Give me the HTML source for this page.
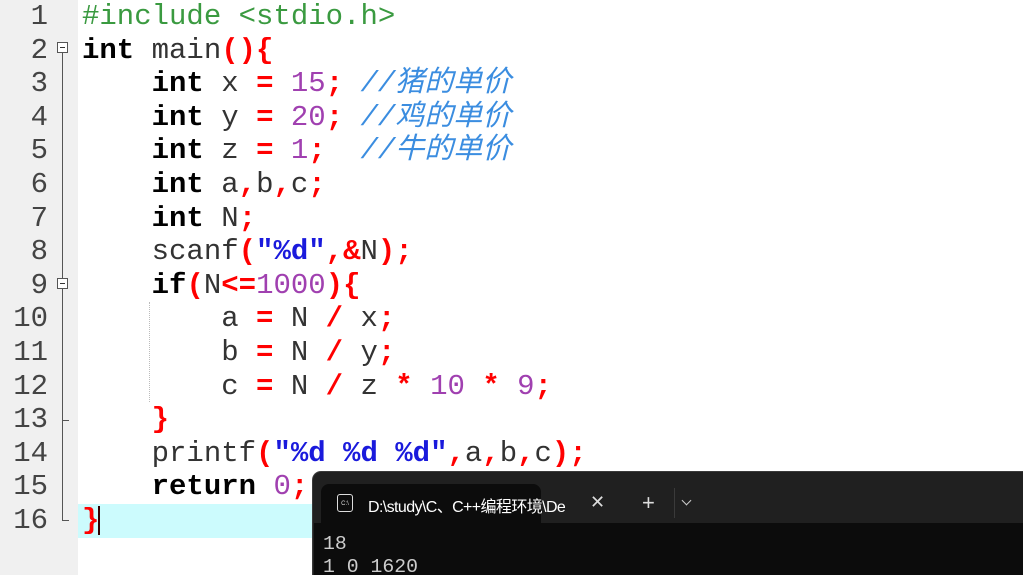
<!DOCTYPE html>
<html style="overflow:hidden;width:1023px;height:575px"><head><meta charset="utf-8"><style>
body{margin:0;width:1023px;height:575px;overflow:hidden;background:#fff;position:relative;font-family:"Liberation Mono","Noto Sans CJK SC",monospace}
.g{position:absolute;left:0;top:0;width:78px;height:575px;background:#f0f0f0}
.r{position:absolute;left:0;height:33.6px;line-height:33.6px;font-size:29px;white-space:pre;width:1023px}
.n{position:absolute;width:48px;text-align:right;color:#444}
.c{position:absolute;left:82px;color:#333}
.k{color:#000;font-weight:bold}
.o{color:#f00;font-weight:bold}
.d{color:#a040b0}
.m{color:#3b8de0;font-style:italic}
.s{color:#1a1adc;font-weight:bold}
.p{color:#3a9a40}
</style></head><body>
<div class="g"></div>
<div style="position:absolute;left:78px;top:504px;width:240px;height:33.6px;background:#ccfbfd"></div>
<div style="position:absolute;left:62px;top:52px;width:1px;height:468px;background:#555"></div>
<div style="position:absolute;left:62px;top:420px;width:7px;height:1px;background:#555"></div>
<div style="position:absolute;left:62px;top:520px;width:7px;height:1px;background:#555"></div>
<div style="position:absolute;left:57px;top:42px;width:9px;height:9px;border:1px solid #555;background:#fff"><div style="position:absolute;left:2px;top:4px;width:5px;height:1px;background:#333"></div></div>
<div style="position:absolute;left:57px;top:278px;width:9px;height:9px;border:1px solid #555;background:#fff"><div style="position:absolute;left:2px;top:4px;width:5px;height:1px;background:#333"></div></div>
<div style="position:absolute;left:149px;top:302px;width:0;height:100px;border-left:1px dotted #bbb"></div>
<div style="position:absolute;left:98px;top:506px;width:2px;height:29px;background:#300"></div>
<div class="r" style="top:0"><span class="n" style="left:0">1</span><span class="c"><span class="p">#include &lt;stdio.h&gt;</span></span></div>
<div class="r" style="top:33.6px"><span class="n" style="left:0">2</span><span class="c"><span class="k">int</span> main<span class="o">(){</span></span></div>
<div class="r" style="top:67.2px"><span class="n" style="left:0">3</span><span class="c">    <span class="k">int</span> x <span class="o">=</span> <span class="d">15</span><span class="o">;</span> <span class="m">//猪的单价</span></span></div>
<div class="r" style="top:100.8px"><span class="n" style="left:0">4</span><span class="c">    <span class="k">int</span> y <span class="o">=</span> <span class="d">20</span><span class="o">;</span> <span class="m">//鸡的单价</span></span></div>
<div class="r" style="top:134.4px"><span class="n" style="left:0">5</span><span class="c">    <span class="k">int</span> z <span class="o">=</span> <span class="d">1</span><span class="o">;</span>  <span class="m">//牛的单价</span></span></div>
<div class="r" style="top:168px"><span class="n" style="left:0">6</span><span class="c">    <span class="k">int</span> a<span class="o">,</span>b<span class="o">,</span>c<span class="o">;</span></span></div>
<div class="r" style="top:201.6px"><span class="n" style="left:0">7</span><span class="c">    <span class="k">int</span> N<span class="o">;</span></span></div>
<div class="r" style="top:235.2px"><span class="n" style="left:0">8</span><span class="c">    scanf<span class="o">(</span><span class="s">"%d"</span><span class="o">,&amp;</span>N<span class="o">);</span></span></div>
<div class="r" style="top:268.8px"><span class="n" style="left:0">9</span><span class="c">    <span class="k">if</span><span class="o">(</span>N<span class="o">&lt;=</span><span class="d">1000</span><span class="o">){</span></span></div>
<div class="r" style="top:302.4px"><span class="n" style="left:0">10</span><span class="c">        a <span class="o">=</span> N <span class="o">/</span> x<span class="o">;</span></span></div>
<div class="r" style="top:336px"><span class="n" style="left:0">11</span><span class="c">        b <span class="o">=</span> N <span class="o">/</span> y<span class="o">;</span></span></div>
<div class="r" style="top:369.6px"><span class="n" style="left:0">12</span><span class="c">        c <span class="o">=</span> N <span class="o">/</span> z <span class="o">*</span> <span class="d">10</span> <span class="o">*</span> <span class="d">9</span><span class="o">;</span></span></div>
<div class="r" style="top:403.2px"><span class="n" style="left:0">13</span><span class="c">    <span class="o">}</span></span></div>
<div class="r" style="top:436.8px"><span class="n" style="left:0">14</span><span class="c">    printf<span class="o">(</span><span class="s">"%d %d %d"</span><span class="o">,</span>a<span class="o">,</span>b<span class="o">,</span>c<span class="o">);</span></span></div>
<div class="r" style="top:470.4px"><span class="n" style="left:0">15</span><span class="c">    <span class="k">return</span> <span class="d">0</span><span class="o">;</span></span></div>
<div class="r" style="top:504px"><span class="n" style="left:0">16</span><span class="c"><span class="o">}</span></span></div>
<div style="position:absolute;left:313px;top:472px;width:710px;height:103px;background:#202020;border-radius:8px 0 0 0;box-shadow:0 0 0 1px #3a3a3a"></div>
<div style="position:absolute;left:314px;top:523px;width:709px;height:52px;background:#0c0c0c"></div>
<div style="position:absolute;left:321px;top:484px;width:220px;height:40px;background:#0c0c0c;border-radius:8px 8px 0 0"></div>
<div style="position:absolute;left:337px;top:494px;width:14px;height:16px;border:1.5px solid #ddd;border-radius:3px;color:#ddd;font:6px 'Liberation Sans',sans-serif;line-height:18px;text-align:center">C:\</div>
<div style="position:absolute;left:368px;top:493px;color:#fff;font:16px 'Liberation Sans','Noto Sans CJK SC',sans-serif;letter-spacing:-0.6px;white-space:nowrap;width:206px;overflow:hidden">D:\study\C、C++编程环境\De</div>
<div style="position:absolute;left:590px;top:492px;color:#ddd;font:18px 'Liberation Sans',sans-serif">✕</div>
<div style="position:absolute;left:642px;top:490px;color:#ddd;font:22px 'Liberation Sans',sans-serif">+</div>
<div style="position:absolute;left:674px;top:488px;width:1px;height:30px;background:#3a3a3a"></div>
<div style="position:absolute;left:683px;top:497px;width:6px;height:6px;border-right:1.5px solid #ccc;border-bottom:1.5px solid #ccc;transform:rotate(45deg)"></div>
<div style="position:absolute;left:323px;top:533px;color:#ccc;font:19.8px 'Liberation Mono',monospace;line-height:23px;white-space:pre">18
1 0 1620</div>
</body></html>
